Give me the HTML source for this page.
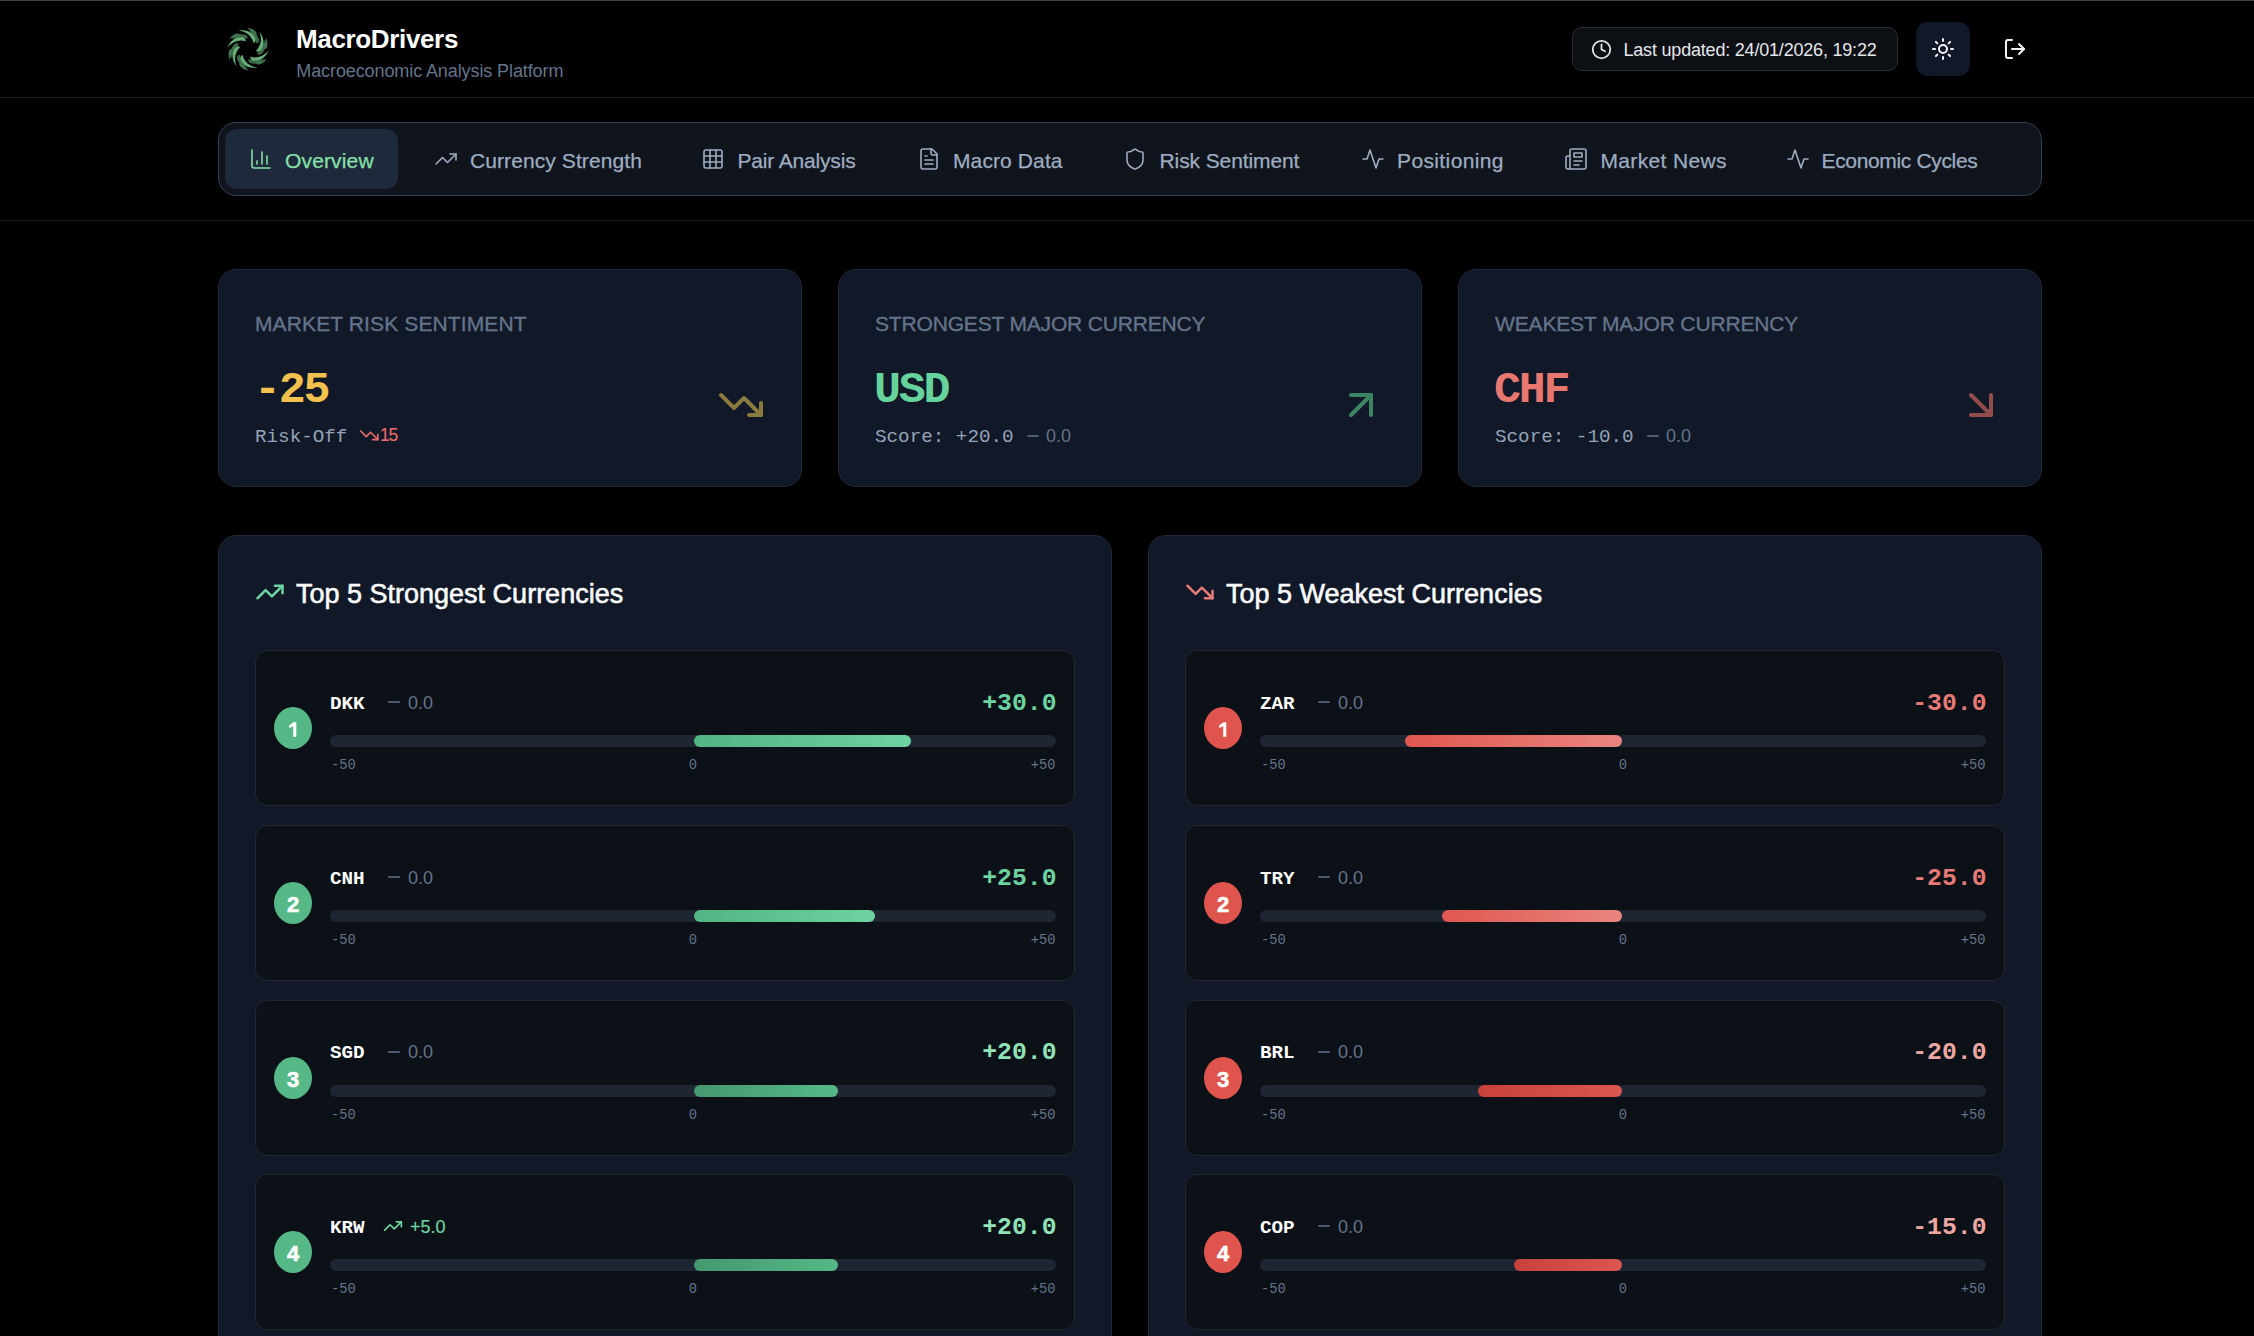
<!DOCTYPE html>
<html><head><meta charset="utf-8"><title>MacroDrivers</title>
<style>
html,body{margin:0;padding:0;background:#000;width:2254px;height:1336px;overflow:hidden;position:relative}
.t{position:absolute;white-space:pre}
.b{position:absolute}
.i{position:absolute;overflow:visible}
.badge{border-radius:50%;color:#fff;font-family:'Liberation Sans', sans-serif;font-weight:700;font-size:22px;line-height:45px;text-align:center;-webkit-text-stroke:0.6px #fff}
</style></head><body>
<div class="b" style="left:0px;top:0px;width:2254px;height:1px;background:#404040"></div>
<div class="b" style="left:0px;top:97px;width:2254px;height:1px;background:#1b1b1b"></div>
<svg class="i" style="left:222px;top:23px;width:52px;height:52px" viewBox="0 0 100 100"><path transform="rotate(0 50 50)" d="M17.96 31.50 L18.86 30.59 L19.79 29.73 L20.74 28.90 L21.72 28.12 L22.71 27.37 L23.72 26.67 L24.74 26.00 L25.78 25.38 L26.83 24.80 L27.89 24.26 L28.96 23.77 L30.03 23.31 L31.12 22.90 L32.20 22.53 L33.29 22.20 L34.39 21.91 L35.52 21.74 L36.68 21.70 L37.83 21.70 L38.96 21.74 L40.08 21.83 L41.17 21.95 L42.25 22.12 L43.30 22.32 L44.33 22.56 L45.34 22.86 L46.36 23.39 L47.35 24.18 L48.30 25.22 L49.18 26.51 L49.28 29.51 L48.62 29.99 L47.97 30.26 L47.31 30.33 L46.60 30.20 L45.85 29.90 L45.07 29.61 L44.26 29.34 L43.43 29.11 L42.57 28.90 L41.69 28.73 L40.79 28.59 L39.88 28.48 L38.94 28.42 L37.94 28.30 L36.87 28.15 L35.78 28.05 L34.66 27.98 L33.52 27.97 L32.35 28.00 L31.16 28.07 L29.95 28.20 L28.73 28.38 L27.48 28.60 L26.21 28.88 L24.93 29.21 L23.63 29.59 L22.30 30.02 L20.94 30.50 L19.53 31.01 L17.96 31.50Z" fill="#3b6a48"/><path transform="rotate(60 50 50)" d="M17.96 31.50 L18.86 30.59 L19.79 29.73 L20.74 28.90 L21.72 28.12 L22.71 27.37 L23.72 26.67 L24.74 26.00 L25.78 25.38 L26.83 24.80 L27.89 24.26 L28.96 23.77 L30.03 23.31 L31.12 22.90 L32.20 22.53 L33.29 22.20 L34.39 21.91 L35.52 21.74 L36.68 21.70 L37.83 21.70 L38.96 21.74 L40.08 21.83 L41.17 21.95 L42.25 22.12 L43.30 22.32 L44.33 22.56 L45.34 22.86 L46.36 23.39 L47.35 24.18 L48.30 25.22 L49.18 26.51 L49.28 29.51 L48.62 29.99 L47.97 30.26 L47.31 30.33 L46.60 30.20 L45.85 29.90 L45.07 29.61 L44.26 29.34 L43.43 29.11 L42.57 28.90 L41.69 28.73 L40.79 28.59 L39.88 28.48 L38.94 28.42 L37.94 28.30 L36.87 28.15 L35.78 28.05 L34.66 27.98 L33.52 27.97 L32.35 28.00 L31.16 28.07 L29.95 28.20 L28.73 28.38 L27.48 28.60 L26.21 28.88 L24.93 29.21 L23.63 29.59 L22.30 30.02 L20.94 30.50 L19.53 31.01 L17.96 31.50Z" fill="#3b6a48"/><path transform="rotate(120 50 50)" d="M17.96 31.50 L18.86 30.59 L19.79 29.73 L20.74 28.90 L21.72 28.12 L22.71 27.37 L23.72 26.67 L24.74 26.00 L25.78 25.38 L26.83 24.80 L27.89 24.26 L28.96 23.77 L30.03 23.31 L31.12 22.90 L32.20 22.53 L33.29 22.20 L34.39 21.91 L35.52 21.74 L36.68 21.70 L37.83 21.70 L38.96 21.74 L40.08 21.83 L41.17 21.95 L42.25 22.12 L43.30 22.32 L44.33 22.56 L45.34 22.86 L46.36 23.39 L47.35 24.18 L48.30 25.22 L49.18 26.51 L49.28 29.51 L48.62 29.99 L47.97 30.26 L47.31 30.33 L46.60 30.20 L45.85 29.90 L45.07 29.61 L44.26 29.34 L43.43 29.11 L42.57 28.90 L41.69 28.73 L40.79 28.59 L39.88 28.48 L38.94 28.42 L37.94 28.30 L36.87 28.15 L35.78 28.05 L34.66 27.98 L33.52 27.97 L32.35 28.00 L31.16 28.07 L29.95 28.20 L28.73 28.38 L27.48 28.60 L26.21 28.88 L24.93 29.21 L23.63 29.59 L22.30 30.02 L20.94 30.50 L19.53 31.01 L17.96 31.50Z" fill="#3b6a48"/><path transform="rotate(180 50 50)" d="M17.96 31.50 L18.86 30.59 L19.79 29.73 L20.74 28.90 L21.72 28.12 L22.71 27.37 L23.72 26.67 L24.74 26.00 L25.78 25.38 L26.83 24.80 L27.89 24.26 L28.96 23.77 L30.03 23.31 L31.12 22.90 L32.20 22.53 L33.29 22.20 L34.39 21.91 L35.52 21.74 L36.68 21.70 L37.83 21.70 L38.96 21.74 L40.08 21.83 L41.17 21.95 L42.25 22.12 L43.30 22.32 L44.33 22.56 L45.34 22.86 L46.36 23.39 L47.35 24.18 L48.30 25.22 L49.18 26.51 L49.28 29.51 L48.62 29.99 L47.97 30.26 L47.31 30.33 L46.60 30.20 L45.85 29.90 L45.07 29.61 L44.26 29.34 L43.43 29.11 L42.57 28.90 L41.69 28.73 L40.79 28.59 L39.88 28.48 L38.94 28.42 L37.94 28.30 L36.87 28.15 L35.78 28.05 L34.66 27.98 L33.52 27.97 L32.35 28.00 L31.16 28.07 L29.95 28.20 L28.73 28.38 L27.48 28.60 L26.21 28.88 L24.93 29.21 L23.63 29.59 L22.30 30.02 L20.94 30.50 L19.53 31.01 L17.96 31.50Z" fill="#3b6a48"/><path transform="rotate(240 50 50)" d="M17.96 31.50 L18.86 30.59 L19.79 29.73 L20.74 28.90 L21.72 28.12 L22.71 27.37 L23.72 26.67 L24.74 26.00 L25.78 25.38 L26.83 24.80 L27.89 24.26 L28.96 23.77 L30.03 23.31 L31.12 22.90 L32.20 22.53 L33.29 22.20 L34.39 21.91 L35.52 21.74 L36.68 21.70 L37.83 21.70 L38.96 21.74 L40.08 21.83 L41.17 21.95 L42.25 22.12 L43.30 22.32 L44.33 22.56 L45.34 22.86 L46.36 23.39 L47.35 24.18 L48.30 25.22 L49.18 26.51 L49.28 29.51 L48.62 29.99 L47.97 30.26 L47.31 30.33 L46.60 30.20 L45.85 29.90 L45.07 29.61 L44.26 29.34 L43.43 29.11 L42.57 28.90 L41.69 28.73 L40.79 28.59 L39.88 28.48 L38.94 28.42 L37.94 28.30 L36.87 28.15 L35.78 28.05 L34.66 27.98 L33.52 27.97 L32.35 28.00 L31.16 28.07 L29.95 28.20 L28.73 28.38 L27.48 28.60 L26.21 28.88 L24.93 29.21 L23.63 29.59 L22.30 30.02 L20.94 30.50 L19.53 31.01 L17.96 31.50Z" fill="#3b6a48"/><path transform="rotate(300 50 50)" d="M17.96 31.50 L18.86 30.59 L19.79 29.73 L20.74 28.90 L21.72 28.12 L22.71 27.37 L23.72 26.67 L24.74 26.00 L25.78 25.38 L26.83 24.80 L27.89 24.26 L28.96 23.77 L30.03 23.31 L31.12 22.90 L32.20 22.53 L33.29 22.20 L34.39 21.91 L35.52 21.74 L36.68 21.70 L37.83 21.70 L38.96 21.74 L40.08 21.83 L41.17 21.95 L42.25 22.12 L43.30 22.32 L44.33 22.56 L45.34 22.86 L46.36 23.39 L47.35 24.18 L48.30 25.22 L49.18 26.51 L49.28 29.51 L48.62 29.99 L47.97 30.26 L47.31 30.33 L46.60 30.20 L45.85 29.90 L45.07 29.61 L44.26 29.34 L43.43 29.11 L42.57 28.90 L41.69 28.73 L40.79 28.59 L39.88 28.48 L38.94 28.42 L37.94 28.30 L36.87 28.15 L35.78 28.05 L34.66 27.98 L33.52 27.97 L32.35 28.00 L31.16 28.07 L29.95 28.20 L28.73 28.38 L27.48 28.60 L26.21 28.88 L24.93 29.21 L23.63 29.59 L22.30 30.02 L20.94 30.50 L19.53 31.01 L17.96 31.50Z" fill="#3b6a48"/><path transform="rotate(0 50 50)" d="M48.57 9.02 L49.33 9.11 L50.09 9.23 L50.85 9.37 L51.60 9.53 L52.35 9.71 L53.09 9.90 L53.82 10.10 L54.54 10.32 L55.26 10.55 L55.98 10.79 L56.68 11.05 L57.38 11.32 L58.07 11.60 L58.75 11.89 L59.42 12.20 L60.09 12.52 L60.73 12.92 L61.33 13.40 L61.92 13.88 L62.50 14.38 L63.06 14.88 L63.61 15.39 L64.15 15.90 L64.67 16.43 L65.18 16.96 L65.66 17.51 L66.06 18.21 L66.35 19.07 L66.54 20.08 L66.60 21.25 L65.40 23.33 L64.69 23.43 L64.07 23.39 L63.53 23.21 L63.07 22.88 L62.67 22.41 L62.27 21.92 L61.85 21.45 L61.42 20.97 L60.97 20.50 L60.51 20.04 L60.04 19.58 L59.56 19.13 L59.06 18.68 L58.57 18.17 L58.08 17.59 L57.57 17.02 L57.05 16.45 L56.51 15.89 L55.95 15.32 L55.37 14.77 L54.78 14.21 L54.16 13.66 L53.53 13.11 L52.88 12.56 L52.21 12.01 L51.53 11.46 L50.82 10.91 L50.09 10.34 L49.34 9.75 L48.57 9.02Z" fill="#3f7550"/><path transform="rotate(60 50 50)" d="M48.57 9.02 L49.33 9.11 L50.09 9.23 L50.85 9.37 L51.60 9.53 L52.35 9.71 L53.09 9.90 L53.82 10.10 L54.54 10.32 L55.26 10.55 L55.98 10.79 L56.68 11.05 L57.38 11.32 L58.07 11.60 L58.75 11.89 L59.42 12.20 L60.09 12.52 L60.73 12.92 L61.33 13.40 L61.92 13.88 L62.50 14.38 L63.06 14.88 L63.61 15.39 L64.15 15.90 L64.67 16.43 L65.18 16.96 L65.66 17.51 L66.06 18.21 L66.35 19.07 L66.54 20.08 L66.60 21.25 L65.40 23.33 L64.69 23.43 L64.07 23.39 L63.53 23.21 L63.07 22.88 L62.67 22.41 L62.27 21.92 L61.85 21.45 L61.42 20.97 L60.97 20.50 L60.51 20.04 L60.04 19.58 L59.56 19.13 L59.06 18.68 L58.57 18.17 L58.08 17.59 L57.57 17.02 L57.05 16.45 L56.51 15.89 L55.95 15.32 L55.37 14.77 L54.78 14.21 L54.16 13.66 L53.53 13.11 L52.88 12.56 L52.21 12.01 L51.53 11.46 L50.82 10.91 L50.09 10.34 L49.34 9.75 L48.57 9.02Z" fill="#3f7550"/><path transform="rotate(120 50 50)" d="M48.57 9.02 L49.33 9.11 L50.09 9.23 L50.85 9.37 L51.60 9.53 L52.35 9.71 L53.09 9.90 L53.82 10.10 L54.54 10.32 L55.26 10.55 L55.98 10.79 L56.68 11.05 L57.38 11.32 L58.07 11.60 L58.75 11.89 L59.42 12.20 L60.09 12.52 L60.73 12.92 L61.33 13.40 L61.92 13.88 L62.50 14.38 L63.06 14.88 L63.61 15.39 L64.15 15.90 L64.67 16.43 L65.18 16.96 L65.66 17.51 L66.06 18.21 L66.35 19.07 L66.54 20.08 L66.60 21.25 L65.40 23.33 L64.69 23.43 L64.07 23.39 L63.53 23.21 L63.07 22.88 L62.67 22.41 L62.27 21.92 L61.85 21.45 L61.42 20.97 L60.97 20.50 L60.51 20.04 L60.04 19.58 L59.56 19.13 L59.06 18.68 L58.57 18.17 L58.08 17.59 L57.57 17.02 L57.05 16.45 L56.51 15.89 L55.95 15.32 L55.37 14.77 L54.78 14.21 L54.16 13.66 L53.53 13.11 L52.88 12.56 L52.21 12.01 L51.53 11.46 L50.82 10.91 L50.09 10.34 L49.34 9.75 L48.57 9.02Z" fill="#3f7550"/><path transform="rotate(180 50 50)" d="M48.57 9.02 L49.33 9.11 L50.09 9.23 L50.85 9.37 L51.60 9.53 L52.35 9.71 L53.09 9.90 L53.82 10.10 L54.54 10.32 L55.26 10.55 L55.98 10.79 L56.68 11.05 L57.38 11.32 L58.07 11.60 L58.75 11.89 L59.42 12.20 L60.09 12.52 L60.73 12.92 L61.33 13.40 L61.92 13.88 L62.50 14.38 L63.06 14.88 L63.61 15.39 L64.15 15.90 L64.67 16.43 L65.18 16.96 L65.66 17.51 L66.06 18.21 L66.35 19.07 L66.54 20.08 L66.60 21.25 L65.40 23.33 L64.69 23.43 L64.07 23.39 L63.53 23.21 L63.07 22.88 L62.67 22.41 L62.27 21.92 L61.85 21.45 L61.42 20.97 L60.97 20.50 L60.51 20.04 L60.04 19.58 L59.56 19.13 L59.06 18.68 L58.57 18.17 L58.08 17.59 L57.57 17.02 L57.05 16.45 L56.51 15.89 L55.95 15.32 L55.37 14.77 L54.78 14.21 L54.16 13.66 L53.53 13.11 L52.88 12.56 L52.21 12.01 L51.53 11.46 L50.82 10.91 L50.09 10.34 L49.34 9.75 L48.57 9.02Z" fill="#3f7550"/><path transform="rotate(240 50 50)" d="M48.57 9.02 L49.33 9.11 L50.09 9.23 L50.85 9.37 L51.60 9.53 L52.35 9.71 L53.09 9.90 L53.82 10.10 L54.54 10.32 L55.26 10.55 L55.98 10.79 L56.68 11.05 L57.38 11.32 L58.07 11.60 L58.75 11.89 L59.42 12.20 L60.09 12.52 L60.73 12.92 L61.33 13.40 L61.92 13.88 L62.50 14.38 L63.06 14.88 L63.61 15.39 L64.15 15.90 L64.67 16.43 L65.18 16.96 L65.66 17.51 L66.06 18.21 L66.35 19.07 L66.54 20.08 L66.60 21.25 L65.40 23.33 L64.69 23.43 L64.07 23.39 L63.53 23.21 L63.07 22.88 L62.67 22.41 L62.27 21.92 L61.85 21.45 L61.42 20.97 L60.97 20.50 L60.51 20.04 L60.04 19.58 L59.56 19.13 L59.06 18.68 L58.57 18.17 L58.08 17.59 L57.57 17.02 L57.05 16.45 L56.51 15.89 L55.95 15.32 L55.37 14.77 L54.78 14.21 L54.16 13.66 L53.53 13.11 L52.88 12.56 L52.21 12.01 L51.53 11.46 L50.82 10.91 L50.09 10.34 L49.34 9.75 L48.57 9.02Z" fill="#3f7550"/><path transform="rotate(300 50 50)" d="M48.57 9.02 L49.33 9.11 L50.09 9.23 L50.85 9.37 L51.60 9.53 L52.35 9.71 L53.09 9.90 L53.82 10.10 L54.54 10.32 L55.26 10.55 L55.98 10.79 L56.68 11.05 L57.38 11.32 L58.07 11.60 L58.75 11.89 L59.42 12.20 L60.09 12.52 L60.73 12.92 L61.33 13.40 L61.92 13.88 L62.50 14.38 L63.06 14.88 L63.61 15.39 L64.15 15.90 L64.67 16.43 L65.18 16.96 L65.66 17.51 L66.06 18.21 L66.35 19.07 L66.54 20.08 L66.60 21.25 L65.40 23.33 L64.69 23.43 L64.07 23.39 L63.53 23.21 L63.07 22.88 L62.67 22.41 L62.27 21.92 L61.85 21.45 L61.42 20.97 L60.97 20.50 L60.51 20.04 L60.04 19.58 L59.56 19.13 L59.06 18.68 L58.57 18.17 L58.08 17.59 L57.57 17.02 L57.05 16.45 L56.51 15.89 L55.95 15.32 L55.37 14.77 L54.78 14.21 L54.16 13.66 L53.53 13.11 L52.88 12.56 L52.21 12.01 L51.53 11.46 L50.82 10.91 L50.09 10.34 L49.34 9.75 L48.57 9.02Z" fill="#3f7550"/><path transform="rotate(0 50 50)" d="M32.47 14.05 L34.21 13.91 L35.92 13.83 L37.61 13.81 L39.27 13.86 L40.91 13.98 L42.51 14.16 L44.09 14.41 L45.63 14.72 L47.13 15.10 L48.60 15.53 L50.02 16.03 L51.40 16.57 L52.74 17.17 L54.03 17.82 L55.27 18.52 L56.46 19.26 L57.57 20.14 L58.60 21.15 L59.56 22.18 L60.45 23.24 L61.27 24.32 L62.02 25.42 L62.70 26.54 L63.31 27.66 L63.86 28.80 L64.31 29.96 L64.57 31.28 L64.60 32.77 L64.37 34.40 L63.86 36.14 L61.60 38.40 L60.91 38.15 L60.38 37.74 L59.99 37.17 L59.70 36.42 L59.48 35.49 L59.22 34.54 L58.89 33.57 L58.51 32.61 L58.06 31.65 L57.54 30.69 L56.96 29.75 L56.32 28.81 L55.61 27.90 L54.85 26.90 L54.04 25.83 L53.16 24.78 L52.19 23.76 L51.14 22.77 L50.02 21.81 L48.81 20.89 L47.53 20.01 L46.18 19.17 L44.75 18.39 L43.24 17.65 L41.66 16.96 L40.00 16.33 L38.27 15.74 L36.46 15.20 L34.55 14.69 L32.47 14.05Z" fill="#68ad77"/><path transform="rotate(60 50 50)" d="M32.47 14.05 L34.21 13.91 L35.92 13.83 L37.61 13.81 L39.27 13.86 L40.91 13.98 L42.51 14.16 L44.09 14.41 L45.63 14.72 L47.13 15.10 L48.60 15.53 L50.02 16.03 L51.40 16.57 L52.74 17.17 L54.03 17.82 L55.27 18.52 L56.46 19.26 L57.57 20.14 L58.60 21.15 L59.56 22.18 L60.45 23.24 L61.27 24.32 L62.02 25.42 L62.70 26.54 L63.31 27.66 L63.86 28.80 L64.31 29.96 L64.57 31.28 L64.60 32.77 L64.37 34.40 L63.86 36.14 L61.60 38.40 L60.91 38.15 L60.38 37.74 L59.99 37.17 L59.70 36.42 L59.48 35.49 L59.22 34.54 L58.89 33.57 L58.51 32.61 L58.06 31.65 L57.54 30.69 L56.96 29.75 L56.32 28.81 L55.61 27.90 L54.85 26.90 L54.04 25.83 L53.16 24.78 L52.19 23.76 L51.14 22.77 L50.02 21.81 L48.81 20.89 L47.53 20.01 L46.18 19.17 L44.75 18.39 L43.24 17.65 L41.66 16.96 L40.00 16.33 L38.27 15.74 L36.46 15.20 L34.55 14.69 L32.47 14.05Z" fill="#68ad77"/><path transform="rotate(120 50 50)" d="M32.47 14.05 L34.21 13.91 L35.92 13.83 L37.61 13.81 L39.27 13.86 L40.91 13.98 L42.51 14.16 L44.09 14.41 L45.63 14.72 L47.13 15.10 L48.60 15.53 L50.02 16.03 L51.40 16.57 L52.74 17.17 L54.03 17.82 L55.27 18.52 L56.46 19.26 L57.57 20.14 L58.60 21.15 L59.56 22.18 L60.45 23.24 L61.27 24.32 L62.02 25.42 L62.70 26.54 L63.31 27.66 L63.86 28.80 L64.31 29.96 L64.57 31.28 L64.60 32.77 L64.37 34.40 L63.86 36.14 L61.60 38.40 L60.91 38.15 L60.38 37.74 L59.99 37.17 L59.70 36.42 L59.48 35.49 L59.22 34.54 L58.89 33.57 L58.51 32.61 L58.06 31.65 L57.54 30.69 L56.96 29.75 L56.32 28.81 L55.61 27.90 L54.85 26.90 L54.04 25.83 L53.16 24.78 L52.19 23.76 L51.14 22.77 L50.02 21.81 L48.81 20.89 L47.53 20.01 L46.18 19.17 L44.75 18.39 L43.24 17.65 L41.66 16.96 L40.00 16.33 L38.27 15.74 L36.46 15.20 L34.55 14.69 L32.47 14.05Z" fill="#68ad77"/><path transform="rotate(180 50 50)" d="M32.47 14.05 L34.21 13.91 L35.92 13.83 L37.61 13.81 L39.27 13.86 L40.91 13.98 L42.51 14.16 L44.09 14.41 L45.63 14.72 L47.13 15.10 L48.60 15.53 L50.02 16.03 L51.40 16.57 L52.74 17.17 L54.03 17.82 L55.27 18.52 L56.46 19.26 L57.57 20.14 L58.60 21.15 L59.56 22.18 L60.45 23.24 L61.27 24.32 L62.02 25.42 L62.70 26.54 L63.31 27.66 L63.86 28.80 L64.31 29.96 L64.57 31.28 L64.60 32.77 L64.37 34.40 L63.86 36.14 L61.60 38.40 L60.91 38.15 L60.38 37.74 L59.99 37.17 L59.70 36.42 L59.48 35.49 L59.22 34.54 L58.89 33.57 L58.51 32.61 L58.06 31.65 L57.54 30.69 L56.96 29.75 L56.32 28.81 L55.61 27.90 L54.85 26.90 L54.04 25.83 L53.16 24.78 L52.19 23.76 L51.14 22.77 L50.02 21.81 L48.81 20.89 L47.53 20.01 L46.18 19.17 L44.75 18.39 L43.24 17.65 L41.66 16.96 L40.00 16.33 L38.27 15.74 L36.46 15.20 L34.55 14.69 L32.47 14.05Z" fill="#68ad77"/><path transform="rotate(240 50 50)" d="M32.47 14.05 L34.21 13.91 L35.92 13.83 L37.61 13.81 L39.27 13.86 L40.91 13.98 L42.51 14.16 L44.09 14.41 L45.63 14.72 L47.13 15.10 L48.60 15.53 L50.02 16.03 L51.40 16.57 L52.74 17.17 L54.03 17.82 L55.27 18.52 L56.46 19.26 L57.57 20.14 L58.60 21.15 L59.56 22.18 L60.45 23.24 L61.27 24.32 L62.02 25.42 L62.70 26.54 L63.31 27.66 L63.86 28.80 L64.31 29.96 L64.57 31.28 L64.60 32.77 L64.37 34.40 L63.86 36.14 L61.60 38.40 L60.91 38.15 L60.38 37.74 L59.99 37.17 L59.70 36.42 L59.48 35.49 L59.22 34.54 L58.89 33.57 L58.51 32.61 L58.06 31.65 L57.54 30.69 L56.96 29.75 L56.32 28.81 L55.61 27.90 L54.85 26.90 L54.04 25.83 L53.16 24.78 L52.19 23.76 L51.14 22.77 L50.02 21.81 L48.81 20.89 L47.53 20.01 L46.18 19.17 L44.75 18.39 L43.24 17.65 L41.66 16.96 L40.00 16.33 L38.27 15.74 L36.46 15.20 L34.55 14.69 L32.47 14.05Z" fill="#68ad77"/><path transform="rotate(300 50 50)" d="M32.47 14.05 L34.21 13.91 L35.92 13.83 L37.61 13.81 L39.27 13.86 L40.91 13.98 L42.51 14.16 L44.09 14.41 L45.63 14.72 L47.13 15.10 L48.60 15.53 L50.02 16.03 L51.40 16.57 L52.74 17.17 L54.03 17.82 L55.27 18.52 L56.46 19.26 L57.57 20.14 L58.60 21.15 L59.56 22.18 L60.45 23.24 L61.27 24.32 L62.02 25.42 L62.70 26.54 L63.31 27.66 L63.86 28.80 L64.31 29.96 L64.57 31.28 L64.60 32.77 L64.37 34.40 L63.86 36.14 L61.60 38.40 L60.91 38.15 L60.38 37.74 L59.99 37.17 L59.70 36.42 L59.48 35.49 L59.22 34.54 L58.89 33.57 L58.51 32.61 L58.06 31.65 L57.54 30.69 L56.96 29.75 L56.32 28.81 L55.61 27.90 L54.85 26.90 L54.04 25.83 L53.16 24.78 L52.19 23.76 L51.14 22.77 L50.02 21.81 L48.81 20.89 L47.53 20.01 L46.18 19.17 L44.75 18.39 L43.24 17.65 L41.66 16.96 L40.00 16.33 L38.27 15.74 L36.46 15.20 L34.55 14.69 L32.47 14.05Z" fill="#68ad77"/></svg>
<div class="t" style="left:296.00px;top:25.69px;font-size:26px;line-height:26px;font-family:'Liberation Sans', sans-serif;font-weight:700;color:#ffffff;letter-spacing:-0.35px">MacroDrivers</div>
<div class="t" style="left:296.30px;top:62.16px;font-size:18px;line-height:18px;font-family:'Liberation Sans', sans-serif;font-weight:400;color:#64748b;letter-spacing:-0.1px">Macroeconomic Analysis Platform</div>
<div class="b" style="left:1572px;top:27px;width:326px;height:44px;background:#0c0f14;border:1px solid #2a2e35;border-radius:10px;box-sizing:border-box"></div>
<svg class="i" style="left:1591px;top:39px;width:21px;height:21px;" viewBox="0 0 24 24" fill="none" stroke="#e5e7eb" stroke-width="2" stroke-linecap="round" stroke-linejoin="round"><circle cx="12" cy="12" r="10"/><polyline points="12 6 12 12 16 14"/></svg>
<div class="t" style="left:1623.50px;top:40.76px;font-size:18px;line-height:18px;font-family:'Liberation Sans', sans-serif;font-weight:400;color:#e5e7eb;letter-spacing:-0.2px">Last updated: 24/01/2026, 19:22</div>
<div class="b" style="left:1916px;top:22px;width:54px;height:54px;background:#111827;border-radius:12px"></div>
<svg class="i" style="left:1931px;top:37px;width:24px;height:24px;" viewBox="0 0 24 24" fill="none" stroke="#f3f4f6" stroke-width="2" stroke-linecap="round" stroke-linejoin="round"><circle cx="12" cy="12" r="4"/><path d="M12 2v2"/><path d="M12 20v2"/><path d="m4.93 4.93 1.41 1.41"/><path d="m17.66 17.66 1.41 1.41"/><path d="M2 12h2"/><path d="M20 12h2"/><path d="m6.34 17.66-1.41 1.41"/><path d="m19.07 4.93-1.41 1.41"/></svg>
<svg class="i" style="left:2003px;top:37px;width:24px;height:24px;" viewBox="0 0 24 24" fill="none" stroke="#f3f4f6" stroke-width="2" stroke-linecap="round" stroke-linejoin="round"><path d="M9 21H5a2 2 0 0 1-2-2V5a2 2 0 0 1 2-2h4"/><polyline points="16 17 21 12 16 7"/><line x1="21" x2="9" y1="12" y2="12"/></svg>
<div class="b" style="left:0px;top:220px;width:2254px;height:1px;background:#1b1b1b"></div>
<div class="b" style="left:218px;top:122px;width:1824px;height:74px;background:#10141c;border:1px solid #334155;border-radius:18px;box-sizing:border-box"></div>
<div class="b" style="left:225px;top:129px;width:173px;height:60px;background:#1e293b;border-radius:12px"></div>
<svg class="i" style="left:249px;top:147px;width:24px;height:24px;" viewBox="0 0 24 24" fill="none" stroke="#86e0a8" stroke-width="1.6" stroke-linecap="round" stroke-linejoin="round"><path d="M3 3v16a2 2 0 0 0 2 2h16"/><path d="M18 17V9"/><path d="M13 17V5"/><path d="M8 17v-3"/></svg>
<div class="t" style="left:285.00px;top:149.62px;font-size:21px;line-height:21px;font-family:'Liberation Sans', sans-serif;font-weight:400;color:#86e0a8;letter-spacing:0.15px;-webkit-text-stroke:0.25px #86e0a8">Overview</div>
<svg class="i" style="left:434px;top:147px;width:24px;height:24px;" viewBox="0 0 24 24" fill="none" stroke="#9eacc0" stroke-width="1.6" stroke-linecap="round" stroke-linejoin="round"><polyline points="22 7 13.5 15.5 8.5 10.5 2 17"/><polyline points="16 7 22 7 22 13"/></svg>
<div class="t" style="left:470.00px;top:149.62px;font-size:21px;line-height:21px;font-family:'Liberation Sans', sans-serif;font-weight:400;color:#9eacc0;letter-spacing:0.09px;-webkit-text-stroke:0.25px #9eacc0">Currency Strength</div>
<svg class="i" style="left:701px;top:147px;width:24px;height:24px;" viewBox="0 0 24 24" fill="none" stroke="#9eacc0" stroke-width="1.6" stroke-linecap="round" stroke-linejoin="round"><rect width="18" height="18" x="3" y="3" rx="2"/><path d="M3 9h18"/><path d="M3 15h18"/><path d="M9 3v18"/><path d="M15 3v18"/></svg>
<div class="t" style="left:737.50px;top:149.62px;font-size:21px;line-height:21px;font-family:'Liberation Sans', sans-serif;font-weight:400;color:#9eacc0;letter-spacing:-0.17px;-webkit-text-stroke:0.25px #9eacc0">Pair Analysis</div>
<svg class="i" style="left:917px;top:147px;width:24px;height:24px;" viewBox="0 0 24 24" fill="none" stroke="#9eacc0" stroke-width="1.6" stroke-linecap="round" stroke-linejoin="round"><path d="M15 2H6a2 2 0 0 0-2 2v16a2 2 0 0 0 2 2h12a2 2 0 0 0 2-2V7Z"/><path d="M14 2v4a2 2 0 0 0 2 2h4"/><path d="M10 9H8"/><path d="M16 13H8"/><path d="M16 17H8"/></svg>
<div class="t" style="left:953.00px;top:149.62px;font-size:21px;line-height:21px;font-family:'Liberation Sans', sans-serif;font-weight:400;color:#9eacc0;letter-spacing:0.11px;-webkit-text-stroke:0.25px #9eacc0">Macro Data</div>
<svg class="i" style="left:1123px;top:147px;width:24px;height:24px;" viewBox="0 0 24 24" fill="none" stroke="#9eacc0" stroke-width="1.6" stroke-linecap="round" stroke-linejoin="round"><path d="M20 13c0 5-3.5 7.5-7.66 8.95a1 1 0 0 1-.67-.01C7.5 20.5 4 18 4 13V6a1 1 0 0 1 1-1c2 0 4.5-1.2 6.24-2.72a1.17 1.17 0 0 1 1.52 0C14.51 3.81 17 5 19 5a1 1 0 0 1 1 1z"/></svg>
<div class="t" style="left:1159.50px;top:149.62px;font-size:21px;line-height:21px;font-family:'Liberation Sans', sans-serif;font-weight:400;color:#9eacc0;letter-spacing:-0.1px;-webkit-text-stroke:0.25px #9eacc0">Risk Sentiment</div>
<svg class="i" style="left:1361px;top:147px;width:24px;height:24px;" viewBox="0 0 24 24" fill="none" stroke="#9eacc0" stroke-width="1.6" stroke-linecap="round" stroke-linejoin="round"><polyline points="22 12 18 12 15 21 9 3 6 12 2 12"/></svg>
<div class="t" style="left:1397.00px;top:149.62px;font-size:21px;line-height:21px;font-family:'Liberation Sans', sans-serif;font-weight:400;color:#9eacc0;letter-spacing:0.38px;-webkit-text-stroke:0.25px #9eacc0">Positioning</div>
<svg class="i" style="left:1564px;top:147px;width:24px;height:24px;" viewBox="0 0 24 24" fill="none" stroke="#9eacc0" stroke-width="1.6" stroke-linecap="round" stroke-linejoin="round"><path d="M4 22h16a2 2 0 0 0 2-2V4a2 2 0 0 0-2-2H8a2 2 0 0 0-2 2v16a2 2 0 0 1-2 2Zm0 0a2 2 0 0 1-2-2v-9c0-1.1.9-2 2-2h2"/><path d="M18 14h-8"/><path d="M15 18h-5"/><path d="M10 6h8v4h-8V6Z"/></svg>
<div class="t" style="left:1600.50px;top:149.62px;font-size:21px;line-height:21px;font-family:'Liberation Sans', sans-serif;font-weight:400;color:#9eacc0;letter-spacing:0.34px;-webkit-text-stroke:0.25px #9eacc0">Market News</div>
<svg class="i" style="left:1786px;top:147px;width:24px;height:24px;" viewBox="0 0 24 24" fill="none" stroke="#9eacc0" stroke-width="1.6" stroke-linecap="round" stroke-linejoin="round"><polyline points="22 12 18 12 15 21 9 3 6 12 2 12"/></svg>
<div class="t" style="left:1821.50px;top:149.62px;font-size:21px;line-height:21px;font-family:'Liberation Sans', sans-serif;font-weight:400;color:#9eacc0;letter-spacing:-0.34px;-webkit-text-stroke:0.25px #9eacc0">Economic Cycles</div>
<div class="b" style="left:218px;top:269px;width:584px;height:218px;background:#111827;border:1px solid #1f2937;border-radius:18px;box-sizing:border-box"></div>
<div class="t" style="left:255.00px;top:312.72px;font-size:21px;line-height:21px;font-family:'Liberation Sans', sans-serif;font-weight:400;color:#64748b;letter-spacing:0.12px;-webkit-text-stroke:0.35px #64748b">MARKET RISK SENTIMENT</div>
<div class="t" style="left:254.00px;top:368.33px;font-size:45px;line-height:45px;font-family:'Liberation Mono', monospace;font-weight:700;color:#f2c14e;letter-spacing:-2.2px">-25</div>
<svg class="i" style="left:717px;top:381px;width:48px;height:48px;" viewBox="0 0 24 24" fill="none" stroke="#8a7a3e" stroke-width="2" stroke-linecap="round" stroke-linejoin="round"><polyline points="22 17 13.5 8.5 8.5 13.5 2 7"/><polyline points="16 17 22 17 22 11"/></svg>
<div class="b" style="left:838px;top:269px;width:584px;height:218px;background:#111827;border:1px solid #1f2937;border-radius:18px;box-sizing:border-box"></div>
<div class="t" style="left:875.00px;top:312.72px;font-size:21px;line-height:21px;font-family:'Liberation Sans', sans-serif;font-weight:400;color:#64748b;letter-spacing:-0.17px;-webkit-text-stroke:0.35px #64748b">STRONGEST MAJOR CURRENCY</div>
<div class="t" style="left:874.00px;top:368.33px;font-size:45px;line-height:45px;font-family:'Liberation Mono', monospace;font-weight:700;color:#66d39c;letter-spacing:-2.2px">USD</div>
<svg class="i" style="left:1337px;top:381px;width:48px;height:48px;" viewBox="0 0 24 24" fill="none" stroke="#3b8562" stroke-width="2" stroke-linecap="round" stroke-linejoin="round"><path d="M7 7h10v10"/><path d="M7 17 17 7"/></svg>
<div class="b" style="left:1458px;top:269px;width:584px;height:218px;background:#111827;border:1px solid #1f2937;border-radius:18px;box-sizing:border-box"></div>
<div class="t" style="left:1495.00px;top:312.72px;font-size:21px;line-height:21px;font-family:'Liberation Sans', sans-serif;font-weight:400;color:#64748b;letter-spacing:-0.15px;-webkit-text-stroke:0.35px #64748b">WEAKEST MAJOR CURRENCY</div>
<div class="t" style="left:1494.00px;top:368.33px;font-size:45px;line-height:45px;font-family:'Liberation Mono', monospace;font-weight:700;color:#e8776f;letter-spacing:-2.2px">CHF</div>
<svg class="i" style="left:1957px;top:381px;width:48px;height:48px;" viewBox="0 0 24 24" fill="none" stroke="#924c4a" stroke-width="2" stroke-linecap="round" stroke-linejoin="round"><path d="m7 7 10 10"/><path d="M17 7v10H7"/></svg>
<div class="t" style="left:255.00px;top:428.25px;font-size:19.25px;line-height:19.25px;font-family:'Liberation Mono', monospace;font-weight:400;color:#94a3b8;">Risk-Off</div>
<svg class="i" style="left:359px;top:425px;width:20.5px;height:20.5px;" viewBox="0 0 24 24" fill="none" stroke="#e86c6c" stroke-width="2" stroke-linecap="round" stroke-linejoin="round"><polyline points="22 17 13.5 8.5 8.5 13.5 2 7"/><polyline points="16 17 22 17 22 11"/></svg>
<div class="t" style="left:380.00px;top:427.18px;font-size:17.5px;line-height:17.5px;font-family:'Liberation Sans', sans-serif;font-weight:400;color:#e86c6c;letter-spacing:-1.2px;-webkit-text-stroke:0.1px #e86c6c">15</div>
<div class="t" style="left:875.00px;top:428.25px;font-size:19.25px;line-height:19.25px;font-family:'Liberation Mono', monospace;font-weight:400;color:#94a3b8;">Score: +20.0</div>
<svg class="i" style="left:1024px;top:427px;width:18px;height:18px;" viewBox="0 0 24 24" fill="none" stroke="#64748b" stroke-width="2" stroke-linecap="round" stroke-linejoin="round"><path d="M5 12h14"/></svg>
<div class="t" style="left:1046.00px;top:426.76px;font-size:18px;line-height:18px;font-family:'Liberation Sans', sans-serif;font-weight:400;color:#64748b;">0.0</div>
<div class="t" style="left:1495.00px;top:428.25px;font-size:19.25px;line-height:19.25px;font-family:'Liberation Mono', monospace;font-weight:400;color:#94a3b8;">Score: -10.0</div>
<svg class="i" style="left:1644px;top:427px;width:18px;height:18px;" viewBox="0 0 24 24" fill="none" stroke="#64748b" stroke-width="2" stroke-linecap="round" stroke-linejoin="round"><path d="M5 12h14"/></svg>
<div class="t" style="left:1666.00px;top:426.76px;font-size:18px;line-height:18px;font-family:'Liberation Sans', sans-serif;font-weight:400;color:#64748b;">0.0</div>
<div class="b" style="left:218px;top:535px;width:894px;height:900px;background:#111827;border:1px solid #1f2937;border-radius:18px;box-sizing:border-box"></div>
<svg class="i" style="left:255px;top:577px;width:30px;height:30px;" viewBox="0 0 24 24" fill="none" stroke="#6dd3a0" stroke-width="2" stroke-linecap="round" stroke-linejoin="round"><polyline points="22 7 13.5 15.5 8.5 10.5 2 17"/><polyline points="16 7 22 7 22 13"/></svg>
<div class="t" style="left:296.00px;top:581.04px;font-size:27px;line-height:27px;font-family:'Liberation Sans', sans-serif;font-weight:400;color:#f8fafc;-webkit-text-stroke:0.6px #f8fafc">Top 5 Strongest Currencies</div>
<div class="b" style="left:255px;top:650px;width:820px;height:156px;background:#0c1017;border:1px solid #23282f;border-radius:12px;box-sizing:border-box"></div>
<div class="b badge" style="left:274px;top:707px;width:38px;height:42px;background:#55b886"><svg style="position:absolute;left:14px;top:15px;width:10px;height:15px;overflow:visible" viewBox="0 0 10 15"><path d="M5.2 0.2 H8.3 V14.8 H5.2 V3.9 Q3.4 5.2 1.2 5.8 V3.1 Q3.8 2.2 5.2 0.2Z" fill="#fff"/></svg></div>
<div class="t" style="left:330.00px;top:694.65px;font-size:19.25px;line-height:19.25px;font-family:'Liberation Mono', monospace;font-weight:700;color:#ffffff;">DKK</div>
<svg class="i" style="left:384.5px;top:693px;width:18px;height:18px;" viewBox="0 0 24 24" fill="none" stroke="#64748b" stroke-width="2" stroke-linecap="round" stroke-linejoin="round"><path d="M5 12h14"/></svg>
<div class="t" style="left:408.00px;top:693.76px;font-size:18px;line-height:18px;font-family:'Liberation Sans', sans-serif;font-weight:400;color:#64748b;">0.0</div>
<div class="t" style="right:1197.50px;top:690.84px;font-size:24.75px;line-height:24.75px;font-family:'Liberation Mono', monospace;font-weight:700;color:#6dd3a0;">+30.0</div>
<div class="b" style="left:330px;top:735px;width:726px;height:12px;background:#1e2533;border-radius:6px"></div>
<div class="b" style="left:694px;top:735px;width:216.8px;height:12px;background:linear-gradient(90deg,#52b383,#6dd3a0);border-radius:6px"></div>
<div class="t" style="left:331.00px;top:759.47px;font-size:13.75px;line-height:13.75px;font-family:'Liberation Mono', monospace;font-weight:400;color:#64748b;">-50</div>
<div class="t" style="left:673px;width:40px;text-align:center;top:759.47px;font-size:13.75px;line-height:13.75px;font-family:'Liberation Mono', monospace;color:#64748b">0</div>
<div class="t" style="right:1198.50px;top:759.47px;font-size:13.75px;line-height:13.75px;font-family:'Liberation Mono', monospace;font-weight:400;color:#64748b;">+50</div>
<div class="b" style="left:255px;top:825px;width:820px;height:156px;background:#0c1017;border:1px solid #23282f;border-radius:12px;box-sizing:border-box"></div>
<div class="b badge" style="left:274px;top:882px;width:38px;height:42px;background:#55b886">2</div>
<div class="t" style="left:330.00px;top:869.65px;font-size:19.25px;line-height:19.25px;font-family:'Liberation Mono', monospace;font-weight:700;color:#ffffff;">CNH</div>
<svg class="i" style="left:384.5px;top:868px;width:18px;height:18px;" viewBox="0 0 24 24" fill="none" stroke="#64748b" stroke-width="2" stroke-linecap="round" stroke-linejoin="round"><path d="M5 12h14"/></svg>
<div class="t" style="left:408.00px;top:868.76px;font-size:18px;line-height:18px;font-family:'Liberation Sans', sans-serif;font-weight:400;color:#64748b;">0.0</div>
<div class="t" style="right:1197.50px;top:865.84px;font-size:24.75px;line-height:24.75px;font-family:'Liberation Mono', monospace;font-weight:700;color:#6dd3a0;">+25.0</div>
<div class="b" style="left:330px;top:910px;width:726px;height:12px;background:#1e2533;border-radius:6px"></div>
<div class="b" style="left:694px;top:910px;width:180.5px;height:12px;background:linear-gradient(90deg,#52b383,#6dd3a0);border-radius:6px"></div>
<div class="t" style="left:331.00px;top:934.47px;font-size:13.75px;line-height:13.75px;font-family:'Liberation Mono', monospace;font-weight:400;color:#64748b;">-50</div>
<div class="t" style="left:673px;width:40px;text-align:center;top:934.47px;font-size:13.75px;line-height:13.75px;font-family:'Liberation Mono', monospace;color:#64748b">0</div>
<div class="t" style="right:1198.50px;top:934.47px;font-size:13.75px;line-height:13.75px;font-family:'Liberation Mono', monospace;font-weight:400;color:#64748b;">+50</div>
<div class="b" style="left:255px;top:999.5px;width:820px;height:156px;background:#0c1017;border:1px solid #23282f;border-radius:12px;box-sizing:border-box"></div>
<div class="b badge" style="left:274px;top:1056.5px;width:38px;height:42px;background:#55b886">3</div>
<div class="t" style="left:330.00px;top:1044.15px;font-size:19.25px;line-height:19.25px;font-family:'Liberation Mono', monospace;font-weight:700;color:#ffffff;">SGD</div>
<svg class="i" style="left:384.5px;top:1042.5px;width:18px;height:18px;" viewBox="0 0 24 24" fill="none" stroke="#64748b" stroke-width="2" stroke-linecap="round" stroke-linejoin="round"><path d="M5 12h14"/></svg>
<div class="t" style="left:408.00px;top:1043.26px;font-size:18px;line-height:18px;font-family:'Liberation Sans', sans-serif;font-weight:400;color:#64748b;">0.0</div>
<div class="t" style="right:1197.50px;top:1040.34px;font-size:24.75px;line-height:24.75px;font-family:'Liberation Mono', monospace;font-weight:700;color:#8fe3b6;">+20.0</div>
<div class="b" style="left:330px;top:1084.5px;width:726px;height:12px;background:#1e2533;border-radius:6px"></div>
<div class="b" style="left:694px;top:1084.5px;width:144.2px;height:12px;background:linear-gradient(90deg,#449870,#55b886);border-radius:6px"></div>
<div class="t" style="left:331.00px;top:1108.97px;font-size:13.75px;line-height:13.75px;font-family:'Liberation Mono', monospace;font-weight:400;color:#64748b;">-50</div>
<div class="t" style="left:673px;width:40px;text-align:center;top:1108.97px;font-size:13.75px;line-height:13.75px;font-family:'Liberation Mono', monospace;color:#64748b">0</div>
<div class="t" style="right:1198.50px;top:1108.97px;font-size:13.75px;line-height:13.75px;font-family:'Liberation Mono', monospace;font-weight:400;color:#64748b;">+50</div>
<div class="b" style="left:255px;top:1174px;width:820px;height:156px;background:#0c1017;border:1px solid #23282f;border-radius:12px;box-sizing:border-box"></div>
<div class="b badge" style="left:274px;top:1231px;width:38px;height:42px;background:#55b886">4</div>
<div class="t" style="left:330.00px;top:1218.65px;font-size:19.25px;line-height:19.25px;font-family:'Liberation Mono', monospace;font-weight:700;color:#ffffff;">KRW</div>
<svg class="i" style="left:383px;top:1216px;width:20px;height:20px;" viewBox="0 0 24 24" fill="none" stroke="#6dd3a0" stroke-width="2" stroke-linecap="round" stroke-linejoin="round"><polyline points="22 7 13.5 15.5 8.5 10.5 2 17"/><polyline points="16 7 22 7 22 13"/></svg>
<div class="t" style="left:410.00px;top:1217.76px;font-size:18px;line-height:18px;font-family:'Liberation Sans', sans-serif;font-weight:400;color:#6dd3a0;-webkit-text-stroke:0.2px #6dd3a0">+5.0</div>
<div class="t" style="right:1197.50px;top:1214.84px;font-size:24.75px;line-height:24.75px;font-family:'Liberation Mono', monospace;font-weight:700;color:#8fe3b6;">+20.0</div>
<div class="b" style="left:330px;top:1259px;width:726px;height:12px;background:#1e2533;border-radius:6px"></div>
<div class="b" style="left:694px;top:1259px;width:144.2px;height:12px;background:linear-gradient(90deg,#449870,#55b886);border-radius:6px"></div>
<div class="t" style="left:331.00px;top:1283.47px;font-size:13.75px;line-height:13.75px;font-family:'Liberation Mono', monospace;font-weight:400;color:#64748b;">-50</div>
<div class="t" style="left:673px;width:40px;text-align:center;top:1283.47px;font-size:13.75px;line-height:13.75px;font-family:'Liberation Mono', monospace;color:#64748b">0</div>
<div class="t" style="right:1198.50px;top:1283.47px;font-size:13.75px;line-height:13.75px;font-family:'Liberation Mono', monospace;font-weight:400;color:#64748b;">+50</div>
<div class="b" style="left:1148px;top:535px;width:894px;height:900px;background:#111827;border:1px solid #1f2937;border-radius:18px;box-sizing:border-box"></div>
<svg class="i" style="left:1185px;top:577px;width:30px;height:30px;" viewBox="0 0 24 24" fill="none" stroke="#e57a76" stroke-width="2" stroke-linecap="round" stroke-linejoin="round"><polyline points="22 17 13.5 8.5 8.5 13.5 2 7"/><polyline points="16 17 22 17 22 11"/></svg>
<div class="t" style="left:1226.00px;top:581.04px;font-size:27px;line-height:27px;font-family:'Liberation Sans', sans-serif;font-weight:400;color:#f8fafc;-webkit-text-stroke:0.6px #f8fafc">Top 5 Weakest Currencies</div>
<div class="b" style="left:1185px;top:650px;width:820px;height:156px;background:#0c1017;border:1px solid #23282f;border-radius:12px;box-sizing:border-box"></div>
<div class="b badge" style="left:1204px;top:707px;width:38px;height:42px;background:#e0544e"><svg style="position:absolute;left:14px;top:15px;width:10px;height:15px;overflow:visible" viewBox="0 0 10 15"><path d="M5.2 0.2 H8.3 V14.8 H5.2 V3.9 Q3.4 5.2 1.2 5.8 V3.1 Q3.8 2.2 5.2 0.2Z" fill="#fff"/></svg></div>
<div class="t" style="left:1260.00px;top:694.65px;font-size:19.25px;line-height:19.25px;font-family:'Liberation Mono', monospace;font-weight:700;color:#ffffff;">ZAR</div>
<svg class="i" style="left:1314.5px;top:693px;width:18px;height:18px;" viewBox="0 0 24 24" fill="none" stroke="#64748b" stroke-width="2" stroke-linecap="round" stroke-linejoin="round"><path d="M5 12h14"/></svg>
<div class="t" style="left:1338.00px;top:693.76px;font-size:18px;line-height:18px;font-family:'Liberation Sans', sans-serif;font-weight:400;color:#64748b;">0.0</div>
<div class="t" style="right:267.50px;top:690.84px;font-size:24.75px;line-height:24.75px;font-family:'Liberation Mono', monospace;font-weight:700;color:#e57a76;">-30.0</div>
<div class="b" style="left:1260px;top:735px;width:726px;height:12px;background:#1e2533;border-radius:6px"></div>
<div class="b" style="left:1405.2px;top:735px;width:216.8px;height:12px;background:linear-gradient(90deg,#e05751,#ea857f);border-radius:6px"></div>
<div class="t" style="left:1261.00px;top:759.47px;font-size:13.75px;line-height:13.75px;font-family:'Liberation Mono', monospace;font-weight:400;color:#64748b;">-50</div>
<div class="t" style="left:1603px;width:40px;text-align:center;top:759.47px;font-size:13.75px;line-height:13.75px;font-family:'Liberation Mono', monospace;color:#64748b">0</div>
<div class="t" style="right:268.50px;top:759.47px;font-size:13.75px;line-height:13.75px;font-family:'Liberation Mono', monospace;font-weight:400;color:#64748b;">+50</div>
<div class="b" style="left:1185px;top:825px;width:820px;height:156px;background:#0c1017;border:1px solid #23282f;border-radius:12px;box-sizing:border-box"></div>
<div class="b badge" style="left:1204px;top:882px;width:38px;height:42px;background:#e0544e">2</div>
<div class="t" style="left:1260.00px;top:869.65px;font-size:19.25px;line-height:19.25px;font-family:'Liberation Mono', monospace;font-weight:700;color:#ffffff;">TRY</div>
<svg class="i" style="left:1314.5px;top:868px;width:18px;height:18px;" viewBox="0 0 24 24" fill="none" stroke="#64748b" stroke-width="2" stroke-linecap="round" stroke-linejoin="round"><path d="M5 12h14"/></svg>
<div class="t" style="left:1338.00px;top:868.76px;font-size:18px;line-height:18px;font-family:'Liberation Sans', sans-serif;font-weight:400;color:#64748b;">0.0</div>
<div class="t" style="right:267.50px;top:865.84px;font-size:24.75px;line-height:24.75px;font-family:'Liberation Mono', monospace;font-weight:700;color:#e57a76;">-25.0</div>
<div class="b" style="left:1260px;top:910px;width:726px;height:12px;background:#1e2533;border-radius:6px"></div>
<div class="b" style="left:1441.5px;top:910px;width:180.5px;height:12px;background:linear-gradient(90deg,#e05751,#ea857f);border-radius:6px"></div>
<div class="t" style="left:1261.00px;top:934.47px;font-size:13.75px;line-height:13.75px;font-family:'Liberation Mono', monospace;font-weight:400;color:#64748b;">-50</div>
<div class="t" style="left:1603px;width:40px;text-align:center;top:934.47px;font-size:13.75px;line-height:13.75px;font-family:'Liberation Mono', monospace;color:#64748b">0</div>
<div class="t" style="right:268.50px;top:934.47px;font-size:13.75px;line-height:13.75px;font-family:'Liberation Mono', monospace;font-weight:400;color:#64748b;">+50</div>
<div class="b" style="left:1185px;top:999.5px;width:820px;height:156px;background:#0c1017;border:1px solid #23282f;border-radius:12px;box-sizing:border-box"></div>
<div class="b badge" style="left:1204px;top:1056.5px;width:38px;height:42px;background:#e0544e">3</div>
<div class="t" style="left:1260.00px;top:1044.15px;font-size:19.25px;line-height:19.25px;font-family:'Liberation Mono', monospace;font-weight:700;color:#ffffff;">BRL</div>
<svg class="i" style="left:1314.5px;top:1042.5px;width:18px;height:18px;" viewBox="0 0 24 24" fill="none" stroke="#64748b" stroke-width="2" stroke-linecap="round" stroke-linejoin="round"><path d="M5 12h14"/></svg>
<div class="t" style="left:1338.00px;top:1043.26px;font-size:18px;line-height:18px;font-family:'Liberation Sans', sans-serif;font-weight:400;color:#64748b;">0.0</div>
<div class="t" style="right:267.50px;top:1040.34px;font-size:24.75px;line-height:24.75px;font-family:'Liberation Mono', monospace;font-weight:700;color:#eda7a3;">-20.0</div>
<div class="b" style="left:1260px;top:1084.5px;width:726px;height:12px;background:#1e2533;border-radius:6px"></div>
<div class="b" style="left:1477.8px;top:1084.5px;width:144.2px;height:12px;background:linear-gradient(90deg,#c8413b,#dc5650);border-radius:6px"></div>
<div class="t" style="left:1261.00px;top:1108.97px;font-size:13.75px;line-height:13.75px;font-family:'Liberation Mono', monospace;font-weight:400;color:#64748b;">-50</div>
<div class="t" style="left:1603px;width:40px;text-align:center;top:1108.97px;font-size:13.75px;line-height:13.75px;font-family:'Liberation Mono', monospace;color:#64748b">0</div>
<div class="t" style="right:268.50px;top:1108.97px;font-size:13.75px;line-height:13.75px;font-family:'Liberation Mono', monospace;font-weight:400;color:#64748b;">+50</div>
<div class="b" style="left:1185px;top:1174px;width:820px;height:156px;background:#0c1017;border:1px solid #23282f;border-radius:12px;box-sizing:border-box"></div>
<div class="b badge" style="left:1204px;top:1231px;width:38px;height:42px;background:#e0544e">4</div>
<div class="t" style="left:1260.00px;top:1218.65px;font-size:19.25px;line-height:19.25px;font-family:'Liberation Mono', monospace;font-weight:700;color:#ffffff;">COP</div>
<svg class="i" style="left:1314.5px;top:1217px;width:18px;height:18px;" viewBox="0 0 24 24" fill="none" stroke="#64748b" stroke-width="2" stroke-linecap="round" stroke-linejoin="round"><path d="M5 12h14"/></svg>
<div class="t" style="left:1338.00px;top:1217.76px;font-size:18px;line-height:18px;font-family:'Liberation Sans', sans-serif;font-weight:400;color:#64748b;">0.0</div>
<div class="t" style="right:267.50px;top:1214.84px;font-size:24.75px;line-height:24.75px;font-family:'Liberation Mono', monospace;font-weight:700;color:#eda7a3;">-15.0</div>
<div class="b" style="left:1260px;top:1259px;width:726px;height:12px;background:#1e2533;border-radius:6px"></div>
<div class="b" style="left:1514.1px;top:1259px;width:107.9px;height:12px;background:linear-gradient(90deg,#c8413b,#dc5650);border-radius:6px"></div>
<div class="t" style="left:1261.00px;top:1283.47px;font-size:13.75px;line-height:13.75px;font-family:'Liberation Mono', monospace;font-weight:400;color:#64748b;">-50</div>
<div class="t" style="left:1603px;width:40px;text-align:center;top:1283.47px;font-size:13.75px;line-height:13.75px;font-family:'Liberation Mono', monospace;color:#64748b">0</div>
<div class="t" style="right:268.50px;top:1283.47px;font-size:13.75px;line-height:13.75px;font-family:'Liberation Mono', monospace;font-weight:400;color:#64748b;">+50</div>
</body></html>
